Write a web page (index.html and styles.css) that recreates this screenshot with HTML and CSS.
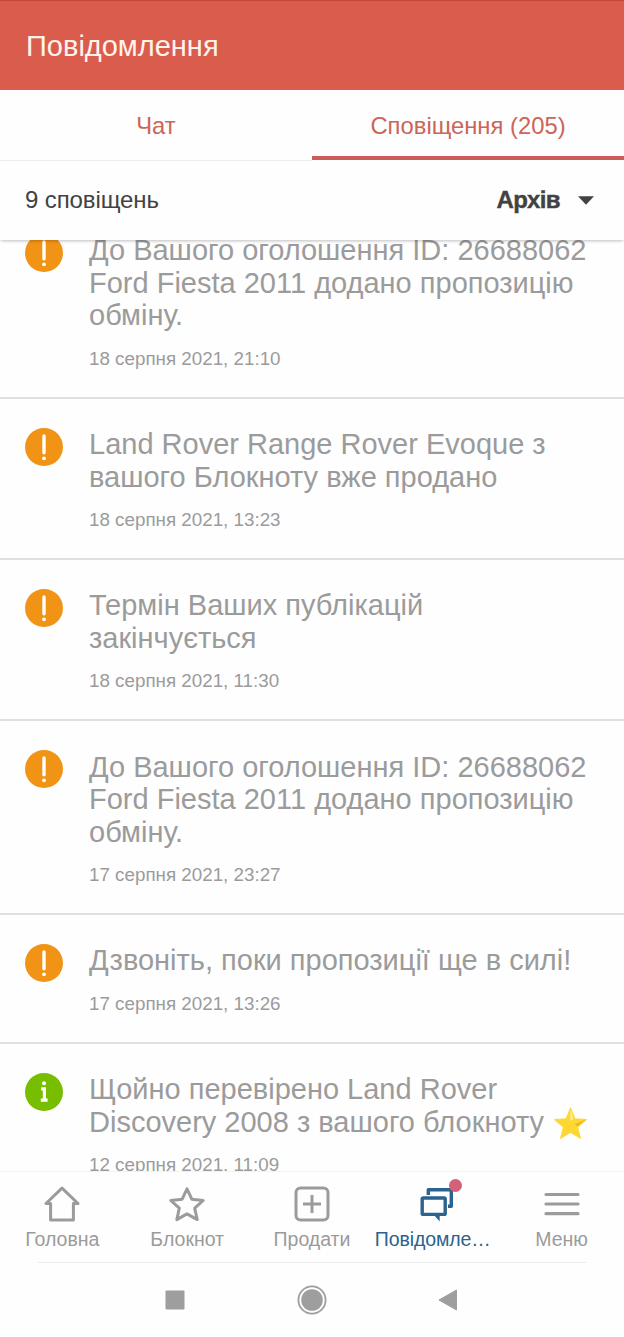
FILE: index.html
```
<!DOCTYPE html>
<html lang="uk">
<head>
    <meta charset="UTF-8">
    <meta name="viewport" content="width=device-width, initial-scale=1.0">
    <title>Повідомлення</title>
    <link rel="stylesheet" href="styles.css">
</head>
<body>

    <!-- Header -->
    <header class="header">
        <h1>Повідомлення</h1>
    </header>

    <!-- Tabs -->
    <nav class="tabs">
        <a class="tab">Чат</a>
        <a class="tab active">Сповіщення (205)</a>
    </nav>

    <!-- Filter -->
    <div class="filter">
        <span class="count">9 сповіщень</span>
        <span class="archive">Архів</span>
        <svg class="arrow" width="16" height="9" viewBox="0 0 16 9"><path d="M0 0.3h16L8 8.7z" fill="#424242"/></svg>
    </div>

    <!-- Notifications -->
    <main class="list">
        <div class="item">
            <svg class="icon" viewBox="0 0 38 38"><circle cx="19" cy="19" r="19" fill="#f19314"/><path d="M19 8v16.8" stroke="#fff" stroke-width="3.4" stroke-linecap="round"/><circle cx="19" cy="30.3" r="1.9" fill="#fff"/></svg>
            <div class="text">
                <h2>До Вашого оголошення ID: 26688062<br>Ford Fiesta 2011 додано пропозицію<br>обміну.</h2>
                <p>18 серпня 2021, 21:10</p>
            </div>
        </div>
        <div class="item">
            <svg class="icon" viewBox="0 0 38 38"><circle cx="19" cy="19" r="19" fill="#f19314"/><path d="M19 8v16.8" stroke="#fff" stroke-width="3.4" stroke-linecap="round"/><circle cx="19" cy="30.3" r="1.9" fill="#fff"/></svg>
            <div class="text">
                <h2>Land Rover Range Rover Evoque з<br>вашого Блокноту вже продано</h2>
                <p>18 серпня 2021, 13:23</p>
            </div>
        </div>
        <div class="item">
            <svg class="icon" viewBox="0 0 38 38"><circle cx="19" cy="19" r="19" fill="#f19314"/><path d="M19 8v16.8" stroke="#fff" stroke-width="3.4" stroke-linecap="round"/><circle cx="19" cy="30.3" r="1.9" fill="#fff"/></svg>
            <div class="text">
                <h2>Термін Ваших публікацій<br>закінчується</h2>
                <p>18 серпня 2021, 11:30</p>
            </div>
        </div>
        <div class="item">
            <svg class="icon" viewBox="0 0 38 38"><circle cx="19" cy="19" r="19" fill="#f19314"/><path d="M19 8v16.8" stroke="#fff" stroke-width="3.4" stroke-linecap="round"/><circle cx="19" cy="30.3" r="1.9" fill="#fff"/></svg>
            <div class="text">
                <h2>До Вашого оголошення ID: 26688062<br>Ford Fiesta 2011 додано пропозицію<br>обміну.</h2>
                <p>17 серпня 2021, 23:27</p>
            </div>
        </div>
        <div class="item">
            <svg class="icon" viewBox="0 0 38 38"><circle cx="19" cy="19" r="19" fill="#f19314"/><path d="M19 8v16.8" stroke="#fff" stroke-width="3.4" stroke-linecap="round"/><circle cx="19" cy="30.3" r="1.9" fill="#fff"/></svg>
            <div class="text">
                <h2>Дзвоніть, поки пропозиції ще в силі!</h2>
                <p>17 серпня 2021, 13:26</p>
            </div>
        </div>
        <div class="item">
            <svg class="icon" viewBox="0 0 38 38"><circle cx="19" cy="19" r="19" fill="#78be00"/><circle cx="19" cy="10.3" r="2" fill="#fff"/><path d="M16.2 15.8h3.2v11.4M15.8 27.2h6.8" stroke="#fff" stroke-width="3.2" fill="none"/></svg>
            <div class="text">
                <h2>Щойно перевірено Land Rover<br>Discovery 2008 з вашого блокноту <svg class="star" viewBox="0 0 32 31"><path d="M16 1l4.2 10.4 11.2 0.7-8.6 7.3 2.9 10.9L16 24.6l-9.7 5.7 2.9-10.9-8.6-7.3 11.2-0.7z" fill="#fdd835" stroke="#fdd835" stroke-linejoin="round"/><path d="M16 2l2.6 9.6-2.6 2z" fill="#fff3a0"/><path d="M31 12.2l-8.4 6.6-2.6-2.3z" fill="#f4b61c"/></svg></h2>
                <p>12 серпня 2021, 11:09</p>
            </div>
        </div>
    </main>

    <!-- Bottom menu -->
    <nav class="menu">
        <a class="menu-item">
            <svg width="36" height="36" viewBox="0 0 36 36" fill="none" stroke="#9b9b9b" stroke-width="3" stroke-linejoin="round" stroke-linecap="round"><path d="M18 2.2L2 17.5h4.6V34h22.8V17.5H34z"/></svg>
            <span>Головна</span>
        </a>
        <a class="menu-item">
            <svg width="36" height="36" viewBox="0 0 36 36" fill="none" stroke="#9b9b9b" stroke-width="3" stroke-linejoin="round"><path d="M18 2.8l4.8 10.4 11.4 1.3-8.5 7.7 2.5 11.4L18 27.9 7.8 33.6l2.5-11.4-8.5-7.7 11.4-1.3z"/></svg>
            <span>Блокнот</span>
        </a>
        <a class="menu-item">
            <svg width="36" height="36" viewBox="0 0 36 36" fill="none" stroke="#9b9b9b" stroke-width="3"><rect x="2" y="2" width="32" height="32" rx="4.5"/><path d="M18 9v18M9 18h18"/></svg>
            <span>Продати</span>
        </a>
        <a class="menu-item active">
            <svg width="36" height="36" viewBox="0 0 36 36" fill="none" stroke="#2a638f" stroke-width="3.4"><path d="M9.3 9V3.8h23v16.4H29" stroke-linejoin="round"/><rect x="3.2" y="12" width="23" height="16.4" rx="1"/><path d="M14 28h6.7v7.5z" fill="#2a638f" stroke="none"/></svg>
            <span>Повідомле…</span>
            <i class="badge"></i>
        </a>
        <a class="menu-item">
            <svg width="36" height="36" viewBox="0 0 36 36" fill="none" stroke="#9b9b9b" stroke-width="3.2" stroke-linecap="round"><path d="M2 8.5h32M2 18h32M2 27.7h32"/></svg>
            <span>Меню</span>
        </a>
    </nav>

    <!-- System buttons -->
    <footer class="system">
        <svg width="20" height="20" viewBox="0 0 20 20"><rect x="0.5" y="0.5" width="19" height="19" rx="1" fill="#9e9e9e"/></svg>
        <svg width="30" height="30" viewBox="0 0 30 30"><circle cx="15" cy="15" r="13.6" fill="none" stroke="#9e9e9e" stroke-width="1.8"/><circle cx="15" cy="15" r="10.8" fill="#9e9e9e"/></svg>
        <svg width="20" height="22" viewBox="0 0 20 22"><path d="M1 11L18.5 1v20z" fill="#9e9e9e" stroke="#9e9e9e" stroke-linejoin="round"/></svg>
    </footer>

</body>
</html>
```
FILE: styles.css
```
body {
    font-family: 'Liberation Sans', Arial, sans-serif;
    background: #fefefe;
    color: #9b9b9b;
    margin: 0;
    height: 1337px;
    display: flex;
    flex-direction: column;
    overflow: hidden;
}

/* Header */
.header {
    box-sizing: border-box;
    height: 90px;
    padding: 1px 26px 0;
    background: #da5c4c;
    border-top: 1px solid #c2483a;
    display: flex;
    align-items: center;
}

.header h1 {
    color: #fff3ec;
    font-size: 29px;
    font-weight: normal;
    margin: 0;
}

/* Tabs */
.tabs {
    display: flex;
    height: 71px;
}

.tab {
    box-sizing: border-box;
    width: 50%;
    border-bottom: 1px solid #ececec;
    color: #cb6557;
    font-size: 23.8px;
    line-height: 71px;
    text-align: center;
}

.tab.active {
    height: 70px;
    border-bottom: 4px solid #cb5d57;
}

/* Filter */
.filter {
    box-sizing: border-box;
    display: flex;
    align-items: center;
    height: 79px;
    padding: 0 30px 1px 25px;
    color: #424242;
    font-size: 24px;
    box-shadow: 0 2px 3px -1px rgba(0, 0, 0, 0.25);
    position: relative;
}

.count {
    letter-spacing: -0.1px;
}

.archive {
    margin-left: auto;
    font-weight: bold;
    letter-spacing: -0.6px;
    -webkit-text-stroke: 0.4px #424242;
}

.arrow {
    margin-left: 18px;
}

/* Notifications */
.list {
    flex: 1;
    min-height: 0;
    overflow: hidden;
}

.item {
    display: flex;
    padding: 29px 26px 26.1px 25px;
    border-bottom: 2px solid #e0e0e0;
}

.item:first-child {
    margin-top: -35px;
}

.icon {
    width: 38px;
    height: 38px;
    flex: none;
    margin-right: 26px;
}

.text h2 {
    font-size: 29px;
    font-weight: normal;
    line-height: 32.4px;
    white-space: nowrap;
    margin: 0.4px 0 0;
}

.text p {
    font-size: 18.8px;
    line-height: 24px;
    margin: 15px 0 0;
}

.star {
    width: 33px;
    height: 32px;
    margin: -4px 0 -5px 2px;
    vertical-align: -2px;
}

/* Bottom menu */
.menu {
    display: flex;
    height: 90px;
    border-top: 1px solid #f2f2f2;
}

.menu-item {
    flex: 1;
    display: flex;
    flex-direction: column;
    align-items: center;
    padding-top: 14px;
    font-size: 19.5px;
    position: relative;
}

.menu-item span {
    margin-top: 6px;
    line-height: 22px;
    white-space: nowrap;
}

.menu-item.active {
    color: #2a638f;
}

.menu-item.active span {
    margin-left: -8px;
    letter-spacing: -0.1px;
}

.badge {
    position: absolute;
    top: 7px;
    left: 75px;
    width: 13px;
    height: 13px;
    border-radius: 50%;
    background: #d1627a;
}

/* System buttons */
.system {
    box-sizing: border-box;
    height: 75px;
    margin: 0 38px;
    border-top: 1px solid #ebebeb;
    display: flex;
    justify-content: space-between;
    align-items: center;
    padding: 0 128px 1px 127px;
}
```
